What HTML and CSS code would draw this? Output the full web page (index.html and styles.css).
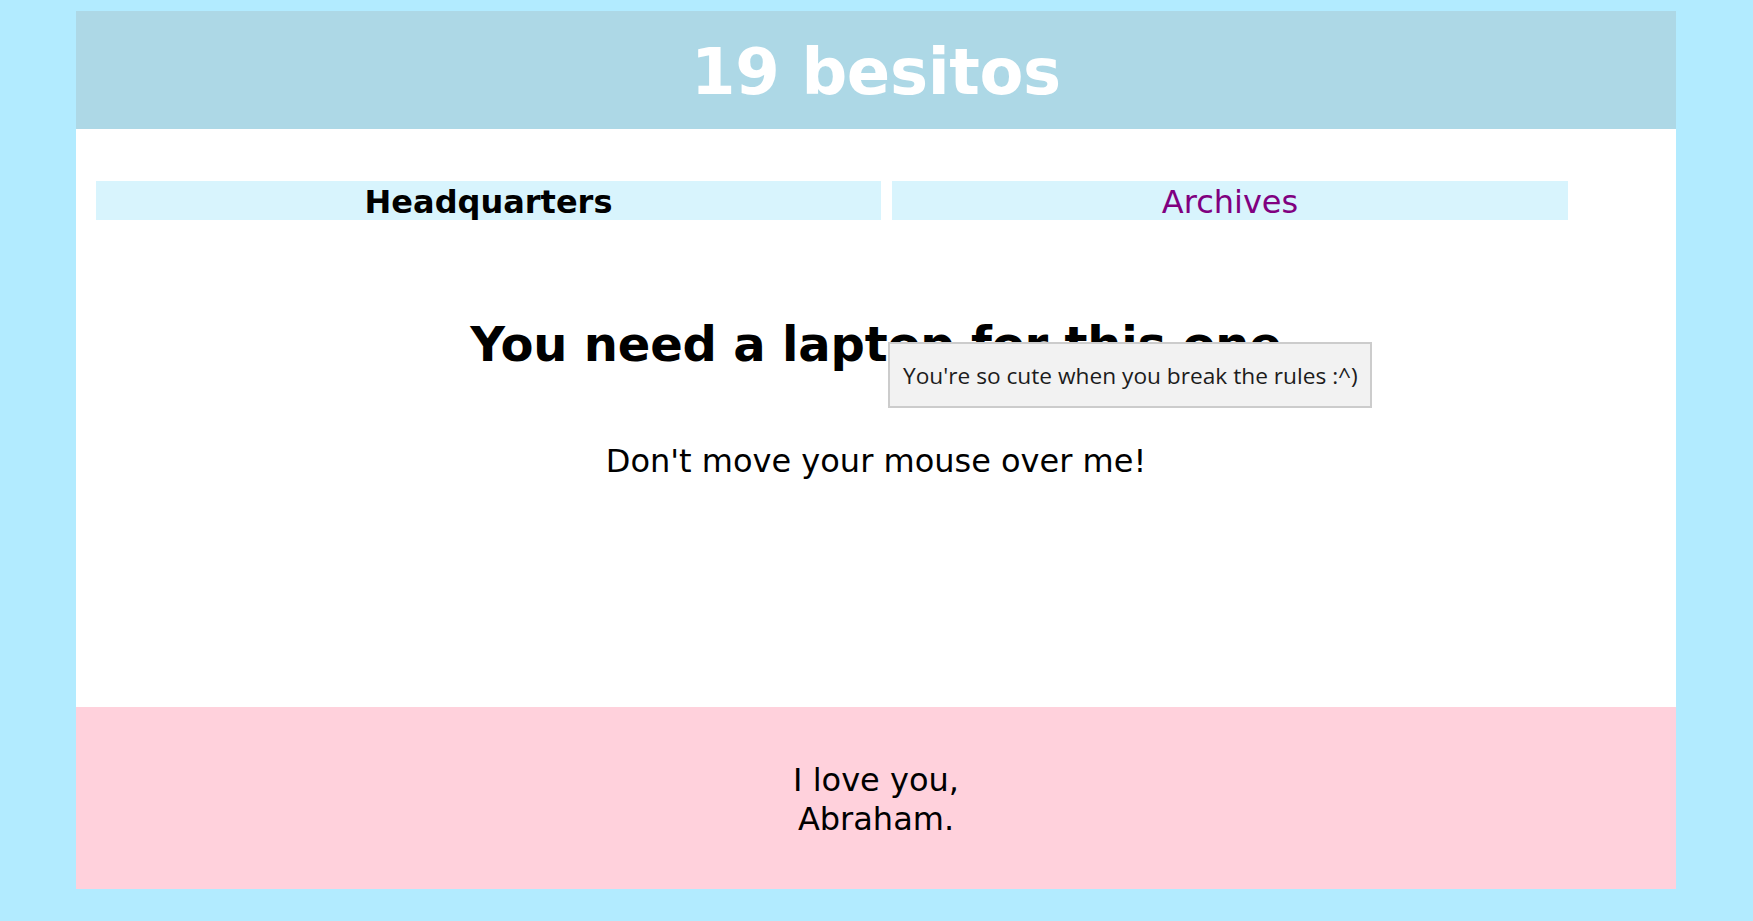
FILE: index.html
```html
<!DOCTYPE html>
<html lang="en">
<head>
<meta charset="utf-8">
<title>19 besitos</title>
<link rel="stylesheet" href="styles.css">
</head>
<body>
<div class="page">
  <header class="site-header">
    <h1 class="site-title">19 besitos</h1>
  </header>
  <main class="content">
    <nav class="tabs">
      <div class="tab tab-current">Headquarters</div>
      <a class="tab tab-link" href="#archives">Archives</a>
    </nav>
    <h2 class="headline">You need a laptop for this one</h2>
    <p class="warning">Don't move your mouse over me!</p>
  </main>
  <footer class="site-footer">
    <p class="signoff">I love you,<br>Abraham.</p>
  </footer>
  <div class="tooltip">You're so cute when you break the rules :^)</div>
</div>
</body>
</html>
```
FILE: styles.css
```css
html, body {
  margin: 0;
  padding: 0;
}
body {
  background: #b2ebff;
  font-family: "DejaVu Sans", Verdana, sans-serif;
  color: #000;
}
.page {
  position: relative;
  width: 1600px;
  margin: 11px 0 0 76px;
}
.site-header {
  height: 118px;
  background: #add8e6;
  display: flex;
  align-items: center;
  justify-content: center;
}
.site-title {
  margin: 0;
  padding-top: 4px;
  font-size: 64px;
  font-weight: bold;
  line-height: 1;
  letter-spacing: -0.35px;
  color: #fff;
}
.content {
  background: #fff;
  padding: 52px 0 226px;
  text-align: center;
}
.tabs {
  display: grid;
  grid-template-columns: 785px 676px;
  column-gap: 11px;
  margin-left: 20px;
}
.tab {
  display: block;
  height: 39px;
  box-sizing: border-box;
  padding-top: 4px;
  line-height: 35px;
  font-size: 32px;
  background: #d8f4fd;
  text-align: center;
  text-decoration: none;
}
.tab-current {
  font-weight: bold;
  color: #000;
}
.tab-link {
  color: #800080;
}
.headline {
  margin: 96px 0 0;
  font-size: 48px;
  line-height: 56px;
  font-weight: bold;
  letter-spacing: -0.18px;
}
.warning {
  margin: 70px 0 0;
  font-size: 32px;
  line-height: 39px;
}
.site-footer {
  background: #ffd1dc;
  padding: 54px 0 50px;
  text-align: center;
}
.signoff {
  margin: 0;
  font-size: 32px;
  line-height: 39px;
}
.tooltip {
  position: absolute;
  left: 812px;
  top: 331px;
  width: 484px;
  height: 66px;
  box-sizing: border-box;
  border: 2px solid #cccccc;
  background: #f2f2f2;
  padding: 0 0 0 13px;
  display: flex;
  align-items: center;
  font-family: "Open Sans", "Noto Sans", sans-serif;
  font-size: 22.7px;
  color: #1c1c1c;
  white-space: nowrap;
}
```
